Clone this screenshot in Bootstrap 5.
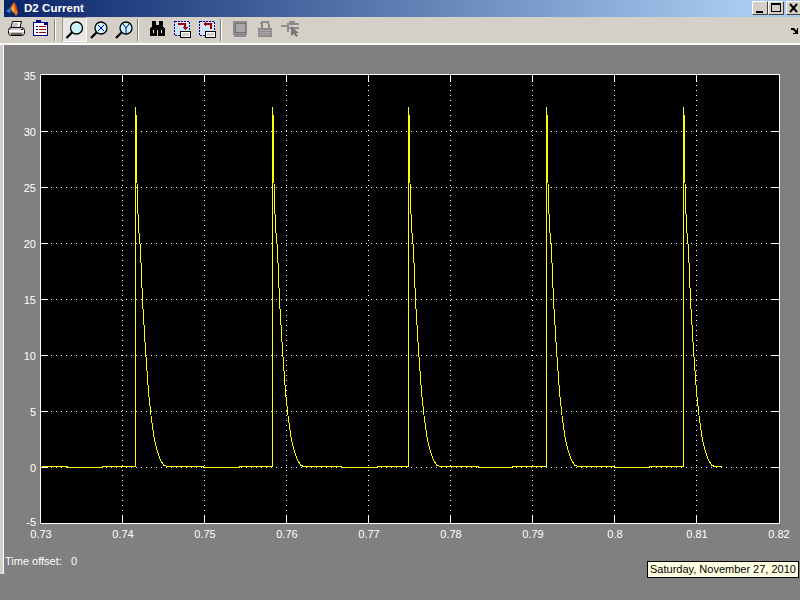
<!DOCTYPE html>
<html lang="en">
<head>
<meta charset="utf-8">
<title>D2 Current</title>
<link href="https://cdn.jsdelivr.net/npm/bootstrap@5.3.0/dist/css/bootstrap.min.css" rel="stylesheet">
<style>
html,body{width:800px;height:600px;overflow:hidden;background:#808080;font-family:"Liberation Sans",Arial,sans-serif}
.win{width:800px;height:600px;position:relative}
.titlebar{height:17px;padding-left:4px;background:#d4d0c8}
.titlefill{height:17px;background:linear-gradient(90deg,#0a246a 0,#a6caf0 92%);padding-right:0}
.title-text{font-size:11.5px;font-weight:700;color:#fff;line-height:17px;margin-left:4px;letter-spacing:.05px}
.wbtn{width:16px;height:14px;margin-top:1px;background:#d4d0c8;border:1px solid;border-color:#fff #404040 #404040 #fff;display:block;padding:0}
.wbtn svg{display:block}
.wbtn.close-b{margin-left:2px;width:14px;border-right:0}
.toolbar{height:26px;background:#d4d0c8;padding-left:4px}
.tool{width:25px;height:26px}
.tool svg{display:block}
.tool.on{background:#e9e7e3;border:1px solid;border-color:#9d9a93 #fff #fff #9d9a93;height:25px}
.tsep{width:8px;height:26px}
.tsep i{display:block;width:2px;height:22px;margin-top:2px;background:linear-gradient(90deg,#808080 50%,#fff 50%)}
.rule{height:2px;background:#fff}
.leftedge{width:4px;height:529px;background:#d4d0c8;border-right:1px solid #fff}
.plot{display:block}
.plot text{font-family:"Liberation Sans",Arial,sans-serif;font-size:11px;fill:#fff}
.offs{font-size:11px;color:#fff;line-height:12px;height:12px;margin-top:5px;margin-left:1px;white-space:pre}
.tip{position:absolute;left:647px;top:561px;width:152px;height:17px;background:#ffffe1;border:1px solid #000;color:#000;font-size:11px;line-height:15px;padding-left:2px;white-space:nowrap}
</style>
</head>
<body>
<div class="win d-flex flex-column">
  <div class="titlebar">
    <div class="titlefill d-flex align-items-start">
      <svg width="16" height="17" viewBox="0 0 16 17" class="flex-shrink-0 ms-0">
        <rect width="16" height="17" fill="#0a246a"/>
        <polygon points="2,11 6,8 8,10 5,13" fill="#3f78c8"/>
        <polygon points="6,8 10,2 12,5 14,13 12,16 9,11" fill="#e8701c"/>
        <polygon points="10,2 12,5 14,13 12,9" fill="#c8300c"/>
        <polygon points="8,8 10,5 10,13 8,11" fill="#f8b830"/>
      </svg>
      <span class="title-text flex-grow-1">D2 Current</span>
      <button class="wbtn" aria-label="Minimize"><svg width="14" height="12"><rect x="3" y="9" width="7" height="2" fill="#000"/></svg></button>
      <button class="wbtn" aria-label="Maximize"><svg width="14" height="12"><path d="M2 1h10v9H2z M3 3v6h8V3z" fill="#000" fill-rule="evenodd"/></svg></button>
      <button class="wbtn close-b" aria-label="Close"><svg width="13" height="12"><path d="M3 2l7 8M10 2l-7 8" stroke="#000" stroke-width="2" fill="none"/></svg></button>
    </div>
  </div>

  <div class="toolbar d-flex align-items-start">
    <div class="tool"><svg width="25" height="26">
      <path d="M8.500 4.500h9l-1.500 6h-9z" fill="#fff" stroke="#000"/>
      <path d="M4.500 13.500q0-3 3-3h10q3 0 3 3v3q0 1-2 2h-12q-2-1-2-2z" fill="#c8c8c8" stroke="#000"/>
      <rect x="5" y="13" width="15" height="2" fill="#fff"/><rect x="7" y="16" width="11" height="2" fill="#606060"/><rect x="17" y="12" width="2" height="1" fill="#000"/>
      <path d="M9 7h5M8.500 9h5" stroke="#808080"/></svg></div>
    <div class="tool"><svg width="25" height="26"><g shape-rendering="crispEdges">
      <rect x="4.500" y="5.500" width="14" height="13" fill="#fff" stroke="#000080" stroke-width="1.500"/>
      <rect x="7" y="3" width="5" height="3" fill="#000080"/><path d="M15 6h4v2h-4z" fill="#000080"/>
      <path d="M7 9h2M7 12h2M7 15h2" stroke="#000080"/><path d="M10 9h7M10 12h7M10 15h7" stroke="#a00000"/></g></svg></div>
    <div class="tsep"><i></i></div>
    <div class="tool on"><svg width="23" height="24"><circle cx="13.500" cy="10" r="6" fill="#c8f4fa" stroke="#000" stroke-width="1.300"/><path d="M10.500 7a4 4 0 0 1 5-1" stroke="#fff" fill="none"/><path d="M9 14.500L3.500 20" stroke="#000" stroke-width="2.300"/></svg></div>
    <div class="tool"><svg width="25" height="26"><circle cx="14" cy="11" r="6" fill="#c8f4fa" stroke="#000" stroke-width="1.300"/><path d="M11 8l6 6M17 8l-6 6" stroke="#0000a0" stroke-width="1"/><path d="M9.500 15.500L4 21" stroke="#000" stroke-width="2.300"/></svg></div>
    <div class="tool"><svg width="25" height="26"><circle cx="14" cy="11" r="6" fill="#c8f4fa" stroke="#000" stroke-width="1.300"/><path d="M11 7l3 4 3-4M14 11v6" stroke="#0000a0" stroke-width="1" fill="none"/><path d="M9.500 15.500L4 21" stroke="#000" stroke-width="2.300"/></svg></div>
    <div class="tsep"><i></i></div>
    <div class="tool"><svg width="25" height="26"><g shape-rendering="crispEdges">
      <path d="M7 4h4v4h3V4h4v5l2 3v7h-7v-6h-1v6H5v-7l2-3z" fill="#000"/><rect x="8" y="13" width="1" height="3" fill="#fff"/><rect x="16" y="13" width="1" height="3" fill="#fff"/></g></svg></div>
    <div class="tool"><svg width="25" height="26"><g shape-rendering="crispEdges">
      <rect x="4.500" y="4.500" width="15" height="14" fill="#cfe4f4" stroke="#000080" stroke-dasharray="2 1"/>
      <path d="M8 7h7v4" fill="none" stroke="#a00000" stroke-width="1.500"/><path d="M12 10h6l-3 3z" fill="#a00000"/>
      <rect x="10.500" y="14.500" width="10" height="6" fill="#fff" stroke="#000"/><rect x="12" y="16" width="7" height="3" fill="#d4d0c8" stroke="none"/></g></svg></div>
    <div class="tool"><svg width="25" height="26"><g shape-rendering="crispEdges">
      <rect x="4.500" y="4.500" width="15" height="14" fill="#cfe4f4" stroke="#000080" stroke-dasharray="2 1"/>
      <path d="M16 12V7H10" fill="none" stroke="#a00000" stroke-width="1.500"/><path d="M11 4v6l-3-3z" fill="#a00000"/>
      <rect x="10.500" y="14.500" width="10" height="6" fill="#fff" stroke="#000"/><rect x="12" y="16" width="7" height="3" fill="#d4d0c8" stroke="none"/></g></svg></div>
    <div class="tsep"><i></i></div>
    <div class="tool"><svg width="25" height="26"><g shape-rendering="crispEdges">
      <rect x="5" y="4" width="14" height="14" rx="1" fill="#8c8c8c"/><rect x="7" y="6" width="10" height="9" fill="#a8a8a8" stroke="#777"/><rect x="6" y="18" width="12" height="2" fill="#8c8c8c"/></g></svg></div>
    <div class="tool"><svg width="25" height="26"><g shape-rendering="crispEdges">
      <path d="M8.500 11V6.500q0-2 2-2h3q2 0 2 2V11" fill="none" stroke="#8c8c8c" stroke-width="2"/><rect x="5" y="11" width="14" height="9" fill="#8c8c8c"/><path d="M6 13h12M6 15h12M6 17h12" stroke="#a8a8a8"/></g></svg></div>
    <div class="tool"><svg width="25" height="26"><g shape-rendering="crispEdges">
      <path d="M3 9h6M9 7h12M9 11h12M11 5h6" stroke="#8c8c8c" stroke-width="2"/><rect x="9" y="6" width="2" height="9" fill="#8c8c8c"/></g>
      <path d="M13 9v10l3-2 2 3 2-1-2-3h3z" fill="#777"/></svg></div>
    <div class="ms-auto" style="width:9px;padding-top:10px"><svg width="9" height="8" class="d-block"><path d="M0 1h3l2 2h1v-2h1v6H2V6h2V5L2 3H0z" fill="#000"/></svg></div>
  </div>
  <div class="rule"></div>

  <div class="d-flex flex-grow-1">
    <div class="leftedge flex-shrink-0"></div>
    <div class="flex-grow-1">
      <svg class="plot" width="796" height="505" viewBox="4 45 796 505">
        <defs>
          <g id="pulse" fill="none" stroke="#ff0" shape-rendering="crispEdges">
            <path d="M.5 359.500V0"/>
            <polyline points="1.500,8 1.500,58 2.500,93 3.500,120 5.500,143 7.500,193 10.500,243 13.500,285 16.500,313 19.500,333 22.500,345 25.500,353 28.500,358 32.500,359.500"/>
          </g>
        </defs>
        <rect x="40" y="74" width="740" height="450" fill="#fff"/>
        <rect x="41" y="75" width="738" height="448" fill="#000"/>
        <g stroke="#fff" stroke-dasharray="1 4" shape-rendering="crispEdges">
          <path d="M122.500 75V523M204.500 75V523M286.500 75V523M368.500 75V523M450.500 75V523M532.500 75V523M614.500 75V523M696.500 75V523"/>
          <path d="M41 131.500H779M41 187.500H779M41 243.500H779M41 299.500H779M41 355.500H779M41 411.500H779M41 467.500H779"/>
        </g>
        <g stroke="#fff" shape-rendering="crispEdges">
          <path d="M122.500 75v7M204.500 75v7M286.500 75v7M368.500 75v7M450.500 75v7M532.500 75v7M614.500 75v7M696.500 75v7"/>
          <path d="M122.500 523v-7M204.500 523v-7M286.500 523v-7M368.500 523v-7M450.500 523v-7M532.500 523v-7M614.500 523v-7M696.500 523v-7"/>
          <path d="M41 131.500h7M41 187.500h7M41 243.500h7M41 299.500h7M41 355.500h7M41 411.500h7M41 467.500h7"/>
          <path d="M779 131.500h-7M779 187.500h-7M779 243.500h-7M779 299.500h-7M779 355.500h-7M779 411.500h-7M779 467.500h-7"/>
        </g>
        <path fill="none" stroke="#ff0" shape-rendering="crispEdges" d="M42 466.500H67V467.500H102V466.500H135M167 466.500H203V467.500H239V466.500H272M302 466.500H341V467.500H377V466.500H408M440 466.500H478V467.500H512V466.500H547M577 466.500H614V467.500H649V466.500H683M713 466.500H722"/>
        <use href="#pulse" x="135" y="107"/>
        <use href="#pulse" x="272" y="107"/>
        <use href="#pulse" x="408" y="107"/>
        <use href="#pulse" x="546" y="107"/>
        <use href="#pulse" x="683" y="107"/>
        <g text-anchor="end">
          <text x="36" y="80">35</text><text x="36" y="136">30</text><text x="36" y="192">25</text><text x="36" y="248">20</text><text x="36" y="304">15</text><text x="36" y="360">10</text><text x="36" y="416">5</text><text x="36" y="472">0</text><text x="36" y="526">-5</text>
        </g>
        <g text-anchor="middle">
          <text x="41" y="538">0.73</text><text x="123" y="538">0.74</text><text x="205" y="538">0.75</text><text x="287" y="538">0.76</text><text x="369" y="538">0.77</text><text x="451" y="538">0.78</text><text x="533" y="538">0.79</text><text x="615" y="538">0.8</text><text x="697" y="538">0.81</text><text x="779" y="538">0.82</text>
        </g>
      </svg>
      <div class="offs">Time offset:   0</div>
    </div>
  </div>
  <div class="tip">Saturday, November 27, 2010</div>
</div>
<script src="https://cdn.jsdelivr.net/npm/bootstrap@5.3.0/dist/js/bootstrap.bundle.min.js"></script>
</body>
</html>
